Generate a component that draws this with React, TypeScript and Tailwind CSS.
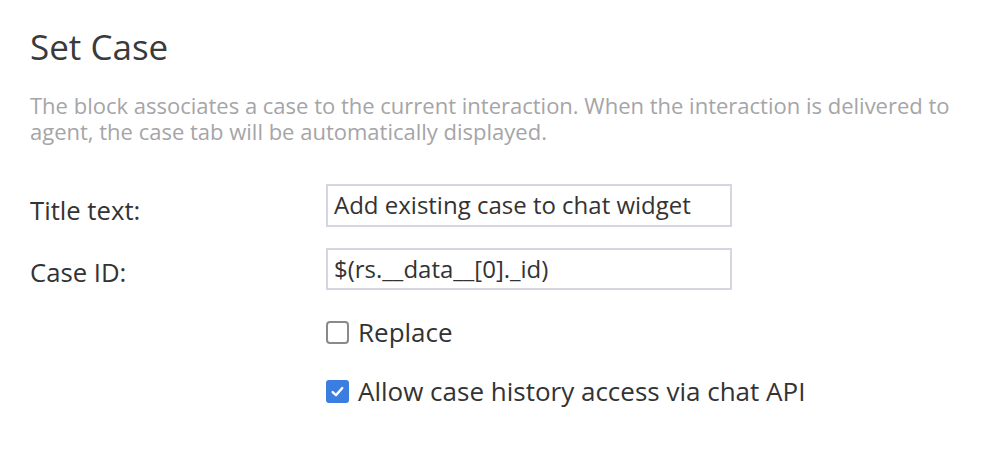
import React from "react";

const font = { fontFamily: '"Open Sans", "Noto Sans", sans-serif' };

function Box({ checked }: { checked?: boolean }) {
  if (checked) {
    return (
      <span className="flex h-[23px] w-[23px] shrink-0 items-center justify-center rounded-[3px] bg-[#3b7de0]">
        <svg width="15" height="15" viewBox="0 0 14 14" fill="none">
          <path d="M2.5 7.5 L5.6 10.4 L11.5 3.8" stroke="white" strokeWidth="2.2" strokeLinecap="round" strokeLinejoin="round" />
        </svg>
      </span>
    );
  }
  return <span className="h-[23px] w-[23px] shrink-0 rounded-[4px] border-2 border-[#8a8a8a] bg-white" />;
}

export default function App() {
  return (
    <div className="min-h-screen w-full bg-white pl-[30px] pt-[23px] text-[#333]" style={font}>
      <h1 className="text-[35px] leading-[48px] text-[#3a3a3a]">Set Case</h1>
      <p className="mt-[21px] w-[950px] text-[22px] leading-[26px] text-[#a5a5a8]">
        The block associates a case to the current interaction. When the interaction is delivered to agent, the case tab
        will be automatically displayed.
      </p>

      <div className="mt-[38px] flex flex-col gap-[20px]">
        <div className="flex items-center">
          <label className="w-[296px] pt-[12px] text-[25.7px] leading-[34px]">Title text:</label>
          <div className="flex h-[43px] w-[406px] items-center border-2 border-[#d6d6e2] px-[6px] text-[24px] text-[#333]">
            Add existing case to chat widget
          </div>
        </div>
        <div className="flex items-center">
          <label className="w-[296px] pt-[8px] text-[25.7px] leading-[34px]">Case ID:</label>
          <div className="flex h-[42px] w-[406px] items-center border-2 border-[#d6d6e2] px-[6px] text-[24px] text-[#333]">
            $(rs.__data__[0]._id)
          </div>
        </div>
      </div>

      <div className="ml-[296px] mt-[24px] flex flex-col gap-[23px]">
        <div className="flex h-[36px] items-center gap-[9px] text-[26px] leading-[36px]">
          <Box />
          <span>Replace</span>
        </div>
        <div className="flex h-[36px] items-center gap-[9px] text-[26px] leading-[36px]">
          <Box checked />
          <span>Allow case history access via chat API</span>
        </div>
      </div>
    </div>
  );
}
